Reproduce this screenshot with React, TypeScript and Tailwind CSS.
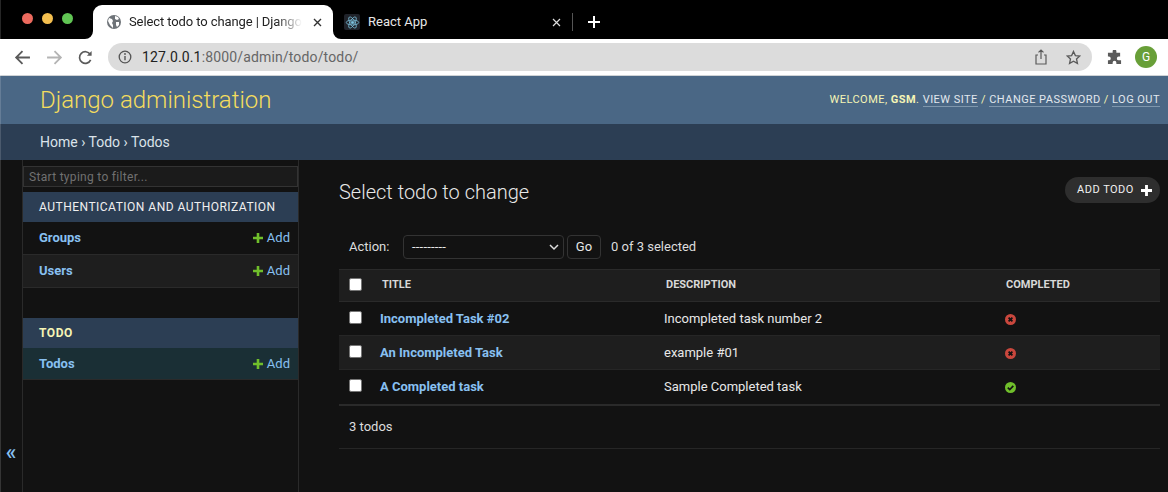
import React from 'react';

const roboto = { fontFamily: 'Roboto, "Liberation Sans", sans-serif' };

const GreenPlus = () => (
  <svg width="10" height="10" viewBox="0 0 10 10" className="shrink-0">
    <path d="M3.7 0h2.6v3.7H10v2.6H6.3V10H3.700V6.300H0V3.700h3.700z" fill="#70bf2b" />
  </svg>
);

const StatusIcon: React.FC<{ done: boolean }> = ({ done }) => (
  <svg width="11" height="11" viewBox="0 0 11 11" className="mt-[2px]">
    <circle cx="5.5" cy="5.5" r="5.5" fill={done ? '#70bf2b' : '#c9473d'} />
    {done ? (
      <path d="M2.8 5.6l2 2 3.5-3.7" stroke="#121212" strokeWidth="1.7" fill="none" />
    ) : (
      <path d="M3.6 3.6l3.8 3.8M7.4 3.6l-3.8 3.8" stroke="#121212" strokeWidth="1.8" fill="none" />
    )}
  </svg>
);

const CheckBox = () => (
  <span className="block w-[13px] h-[13px] bg-white border border-[#767676] rounded-[2px]" />
);

const SideRow: React.FC<{ label: string; className: string }> = ({ label, className }) => (
  <div className={`flex items-center justify-between pl-4 pr-2 border-b border-[#2a2a2a] ${className}`}>
    <span className="text-[13px] font-bold text-[#88c0f1]">{label}</span>
    <span className="flex items-center gap-1 text-[13px] text-[#88c0f1]">
      <GreenPlus />
      Add
    </span>
  </div>
);

const rows = [
  { title: 'Incompleted Task #02', desc: 'Incompleted task number 2', done: false, bg: 'bg-[#121212]' },
  { title: 'An Incompleted Task', desc: 'example #01', done: false, bg: 'bg-[#1e1e1e]' },
  { title: 'A Completed task', desc: 'Sample Completed task', done: true, bg: 'bg-[#121212]' },
];

const BrowserChrome = () => (
  <div className="shrink-0" style={{ fontFamily: '"Liberation Sans", sans-serif' }}>
    <div className="h-[39px] bg-black flex items-end relative">
      <div className="flex gap-[9px] pl-[22px] self-start pt-[13px] w-[93px] shrink-0">
        <span className="w-[11px] h-[11px] rounded-full bg-[#ec6a5e]" />
        <span className="w-[11px] h-[11px] rounded-full bg-[#f4bf4f]" />
        <span className="w-[11px] h-[11px] rounded-full bg-[#61c554]" />
      </div>
      <div className="relative w-[240px] h-[34px] shrink-0 bg-white rounded-t-[9px] flex items-center pl-[14px] gap-[8px]">
        <svg width="8" height="8" viewBox="0 0 8 8" className="absolute -left-[8px] bottom-0">
          <path d="M8 0v8H0a8 8 0 0 0 8-8z" fill="#fff" />
        </svg>
        <svg width="8" height="8" viewBox="0 0 8 8" className="absolute -right-[8px] bottom-0">
          <path d="M0 0v8h8a8 8 0 0 1-8-8z" fill="#fff" />
        </svg>
        <svg width="14" height="14" viewBox="0 0 14 14" className="shrink-0">
          <circle cx="7" cy="7" r="7" fill="#6e7378" />
          <path d="M2 3l3 1 1 2-1 2 1 2v3L3 10 1 6zM8 1l3 1 1 2-2 1-2-1zM9 7l3 0 0 3-2 2-1-2z" fill="#fff" />
        </svg>
        <span
          className="text-[13px] tracking-[-0.1px] text-[#222] whitespace-nowrap overflow-hidden w-[173px] [mask-image:linear-gradient(to_right,black_85%,transparent)]"
          style={roboto}
        >
          Select todo to change | Django
        </span>
        <svg width="9" height="9" viewBox="0 0 9 9" className="shrink-0 ml-[3px]">
          <path d="M1 1l7 7M8 1L1 8" stroke="#333" strokeWidth="1.4" />
        </svg>
      </div>
      <div className="h-[34px] flex items-center pl-[11px] gap-[8px]">
        <span className="w-[16px] h-[16px] bg-[#20232a] rounded-[2px] flex items-center justify-center shrink-0">
          <svg width="15" height="15" viewBox="-12 -12 24 24" fill="none" stroke="#7fc4e0" strokeWidth="1.2">
            <circle r="2" fill="#7fc4e0" />
            <ellipse rx="10" ry="4" />
            <ellipse rx="10" ry="4" transform="rotate(60)" />
            <ellipse rx="10" ry="4" transform="rotate(120)" />
          </svg>
        </span>
        <span className="text-[13px] text-[#e8e8e8] w-[176px]" style={roboto}>React App</span>
        <svg width="9" height="9" viewBox="0 0 9 9" className="shrink-0">
          <path d="M1 1l7 7M8 1L1 8" stroke="#ddd" strokeWidth="1.2" />
        </svg>
        <span className="w-px h-[18px] bg-[#555] ml-[3px]" />
      </div>
      <svg width="12" height="12" viewBox="0 0 12 12" className="absolute left-[588px] top-[16px]">
        <path d="M6 0v12M0 6h12" stroke="#fff" strokeWidth="2" />
      </svg>
    </div>
    <div className="h-[37px] bg-white flex items-center border-b border-[#cfd3d6]">
      <div className="flex items-center gap-[15px] pl-[14px] w-[108px]">
        <svg width="17" height="17" viewBox="0 0 16 16" fill="none" stroke="#5a5a5a" strokeWidth="1.7">
          <path d="M15 8H2M8 2L2 8l6 6" />
        </svg>
        <svg width="17" height="17" viewBox="0 0 16 16" fill="none" stroke="#b4b4b4" strokeWidth="1.7">
          <path d="M1 8h13M8 2l6 6-6 6" />
        </svg>
        <svg width="15" height="15" viewBox="0 0 16 16" fill="none" stroke="#5a5a5a" strokeWidth="1.8">
          <path d="M13.5 10.5A6.2 6.2 0 1 1 13 4.6" />
          <path d="M14.5 1v5h-5z" fill="#5a5a5a" stroke="none" />
        </svg>
      </div>
      <div className="w-[984px] h-[28px] rounded-full bg-[#dcdcdc] flex items-center pl-[10px] pr-[10px]">
        <svg width="14" height="14" viewBox="0 0 14 14" fill="none" className="shrink-0">
          <circle cx="7" cy="7" r="5.8" stroke="#555" strokeWidth="1.3" />
          <path d="M7 6v4.2" stroke="#555" strokeWidth="1.4" />
          <circle cx="7" cy="4" r="0.9" fill="#555" />
        </svg>
        <span className="ml-[10px] text-[14px] text-[#666] tracking-[0.15px]" style={roboto}>
          <span className="text-[#222]">127.0.0.1</span>:8000/admin/todo/todo/
        </span>
        <span className="ml-auto flex items-center gap-[18px] pr-[1px]">
          <svg width="14" height="16" viewBox="0 0 14 16" fill="none" stroke="#5a5a5a" strokeWidth="1.2">
            <path d="M4 6H2v9h10V6h-2M7 10V1M4.5 3.4L7 1l2.5 2.4" />
          </svg>
          <svg width="15" height="15" viewBox="0 0 16 16" fill="none" stroke="#5a5a5a" strokeWidth="1.4">
            <path d="M8 1.5l2 4.4 4.7.5-3.5 3.2 1 4.7L8 11.9l-4.2 2.4 1-4.7L1.300 6.400 6 5.900z" />
          </svg>
        </span>
      </div>
      <svg width="15" height="15" viewBox="0 0 16 16" fill="#5a5a5a" className="ml-[15px]">
        <path d="M6 1.500a2 2 0 0 1 4 0V3h4v4h-1.500a2 2 0 0 0 0 4H15v4H10v-1.500a2 2 0 0 0-4 0V15H1v-4h1a2 2 0 0 0 0-4H1V3h5z" />
      </svg>
      <span className="ml-[13px] w-[22px] h-[22px] rounded-full bg-[#689f38] text-white text-[12px] flex items-center justify-center" style={roboto}>
        G
      </span>
    </div>
  </div>
);

const App: React.FC = () => {
  return (
    <div className="relative w-[1168px] h-[492px] overflow-hidden flex flex-col bg-[#121212]" style={roboto}>
      <BrowserChrome />

      <header className="h-[48px] shrink-0 bg-[#4a6785] flex items-center justify-between pl-10 pr-2">
        <span className="text-[24px] font-light text-[#f5dd5d]">Django administration</span>
        <span className="text-[11px] uppercase tracking-[0.47px] text-[#f5f5b5]">
          Welcome, <b className="font-bold">GSM</b>.{' '}
          <span className="text-[#e2e8ee] border-b border-[#7f97ad]">View site</span> /{' '}
          <span className="text-[#e2e8ee] border-b border-[#7f97ad]">Change password</span> /{' '}
          <span className="text-[#e2e8ee] border-b border-[#7f97ad]">Log out</span>
        </span>
      </header>

      <div className="h-[36px] shrink-0 bg-[#2c3e54] flex items-center pl-10 text-[14px] text-[#dbe3ea]">
        Home › Todo › Todos
      </div>

      <div className="flex-1 flex min-h-0">
        <div className="w-[23px] shrink-0 border-r border-[#2a2a2a] flex items-end justify-center pb-[30px]">
          <span className="text-[22px] leading-[20px] font-medium text-[#88c0f1]">«</span>
        </div>

        <aside className="w-[276px] shrink-0 border-r border-[#2a2a2a] flex flex-col pt-[6px]">
          <div className="h-[21px] border border-[#333] bg-[#1b1b1b] flex items-center pl-[5px] text-[12px] text-[#717171] tracking-[0.3px]">
            Start typing to filter...
          </div>
          <div className="h-[30px] mt-[5px] bg-[#2c3e54] flex items-center pl-4 text-[12px] tracking-[0.49px] text-[#f0f0f0]">
            AUTHENTICATION AND AUTHORIZATION
          </div>
          <SideRow label="Groups" className="h-[33px] bg-[#121212]" />
          <SideRow label="Users" className="h-[33px] bg-[#1e1e1e]" />
          <div className="h-[30px] mt-[30px] bg-[#2c3e54] flex items-center pl-4 text-[12px] font-bold tracking-[0.55px] text-[#f5f5b5]">
            TODO
          </div>
          <SideRow label="Todos" className="h-[32px] bg-[#1a2f35]" />
        </aside>

        <main className="flex-1 min-w-0 pl-[40px] pr-2 pt-[17px]">
          <div className="flex justify-between h-[50px]">
            <h1 className="text-[20px] leading-[30px] font-light text-[#e8e8e8]">Select todo to change</h1>
            <span className="h-[26px] w-[95px] rounded-full bg-[#2e2e2e] flex items-center justify-between pl-3 pr-[8px] text-[11px] tracking-[0.5px] text-[#f0f0f0]">
              ADD TODO
              <svg width="11" height="11" viewBox="0 0 10 10">
                <path d="M3.700 0h2.600v3.700H10v2.600H6.300V10H3.700V6.300H0V3.700h3.700z" fill="#fff" />
              </svg>
            </span>
          </div>

          <div className="h-[24px] mt-[8px] pl-[10px] flex items-center text-[13px] text-[#ddd]">
            <span className="w-[54px]">Action:</span>
            <span className="w-[161px] h-[24px] border border-[#333] rounded-[4px] bg-[#121212] flex items-center justify-between pl-2 pr-[4px] text-[#e8e8e8]">
              <span className="tracking-[0.2px]">---------</span>
              <svg width="10" height="8" viewBox="0 0 10 8" fill="none" stroke="#ddd" strokeWidth="1.500">
                <path d="M1 2l4 4 4-4" />
              </svg>
            </span>
            <span className="ml-[3px] w-[34px] h-[24px] border border-[#333] rounded-[4px] flex items-center justify-center text-[#e8e8e8]">
              Go
            </span>
            <span className="ml-[10px]">0 of 3 selected</span>
          </div>

          <div className="mt-[10px] border-b-2 border-[#2a2a2a]">
            <div className="h-[33px] bg-[#1e1e1e] border-y border-[#2a2a2a] flex items-center text-[11px] font-bold text-[#d8d8d8]">
              <span className="w-[43px] pl-[10px] -mt-[3px]"><CheckBox /></span>
              <span className="w-[284px]">TITLE</span>
              <span className="w-[340px]">DESCRIPTION</span>
              <span>COMPLETED</span>
            </div>
            {rows.map(r => (
              <div key={r.title} className={`h-[34px] flex items-center border-b border-[#262626] last:border-b-transparent ${r.bg}`}>
                <span className="w-[41px] pl-[10px] -mt-[2px]"><CheckBox /></span>
                <span className="w-[284px] text-[13px] font-bold text-[#88c0f1]">{r.title}</span>
                <span className="w-[341px] text-[13px] text-[#e8e8e8]">{r.desc}</span>
                <StatusIcon done={r.done} />
              </div>
            ))}
          </div>

          <div className="h-[43px] pl-[10px] flex items-center border-b border-[#262626] text-[13px] text-[#ddd]">
            3 todos
          </div>
        </main>
      </div>

      <div className="absolute inset-y-0 left-0 w-px bg-[#ffffff26]" />
    </div>
  );
};

export default App;
